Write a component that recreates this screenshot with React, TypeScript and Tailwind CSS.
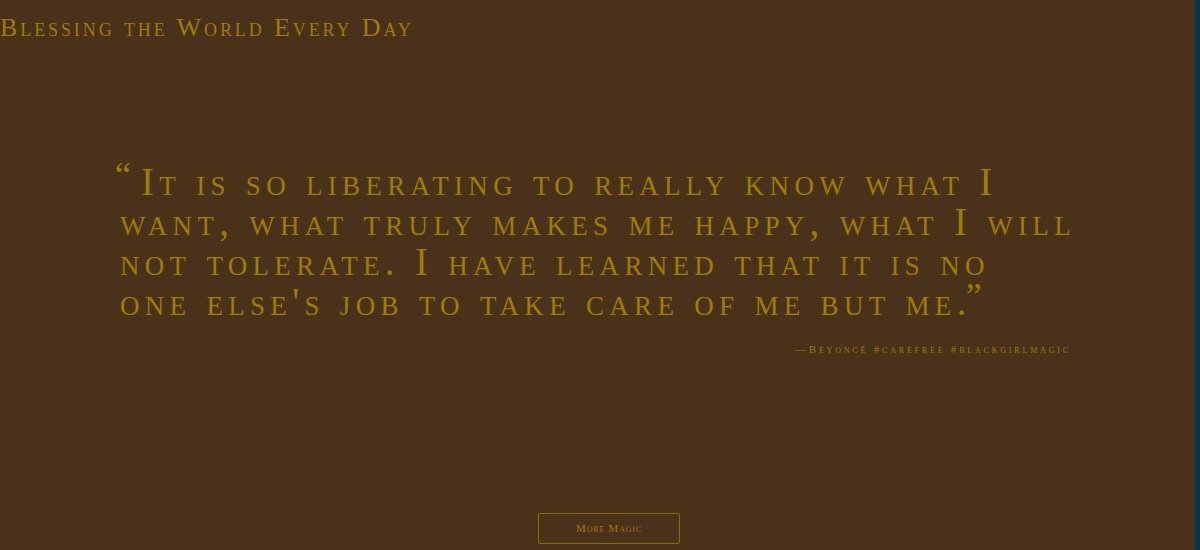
export default function App() {
  return (
    <div className="flex h-[550px] w-full overflow-hidden bg-[#4a3119]">
      {/* main column */}
      <div className="flex flex-1 flex-col text-[#9e7d04] [font-family:'Liberation_Serif',serif] [font-variant-caps:small-caps]">
        <h1 className="pt-3 text-[26px] leading-[32px] tracking-[2.9px]">Blessing the World Every Day</h1>

        <blockquote className="mt-[118px] ml-[120px] indent-[-5px] text-[39px] leading-[40px] tracking-[5.3px]">
          <span className="relative -top-[8px] -mr-[5px] text-[36px] leading-none tracking-normal">“</span> It is so liberating to really know what I
          <br />
          want, what truly makes me happy, what I will
          <br />
          not tolerate. I have learned that it is no
          <br />
          one else's job to take care of me but me.
          <span className="relative -top-[7px] -ml-[6px] text-[36px] leading-none tracking-normal">”</span>
        </blockquote>

        <p className="mt-[19px] ml-[795px] text-[11px] leading-4 tracking-[2.8px]">—Beyoncé #carefree #blackgirlmagic</p>

        <button className="mt-auto mb-[6px] ml-[538px] h-[31px] w-[142px] rounded-[2px] border border-[#8a6d04] text-[11px] tracking-[0.8px]">
          More Magic
        </button>
      </div>

      {/* right edge strip */}
      <div className="w-[5px] bg-[#06394a]" />
    </div>
  )
}
